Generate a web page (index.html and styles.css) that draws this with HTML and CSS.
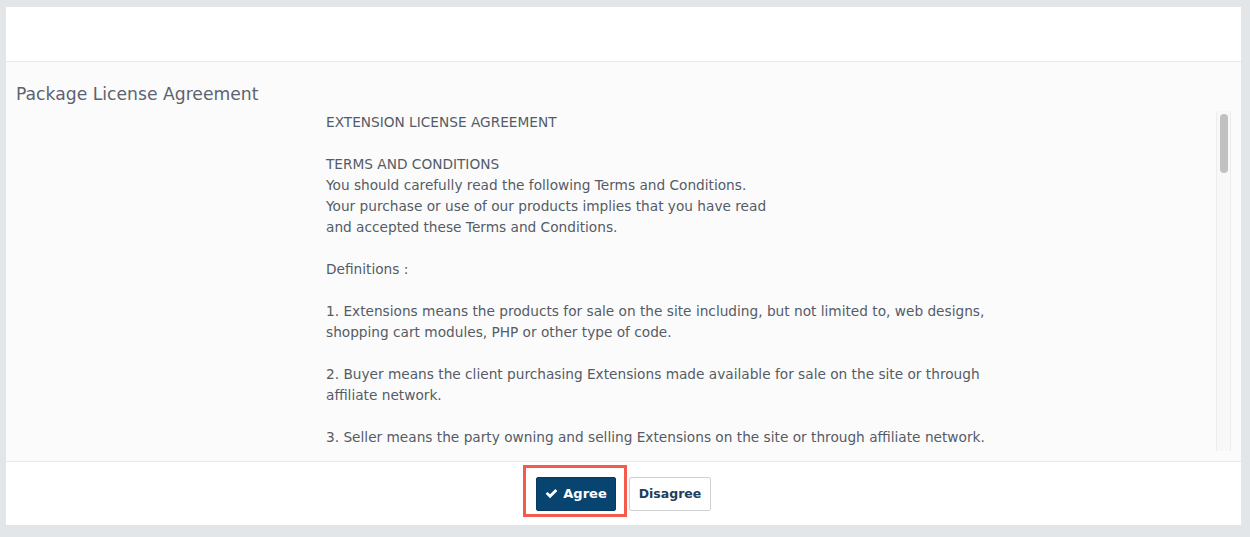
FILE: index.html
```html
<!DOCTYPE html>
<html>
<head>
<meta charset="utf-8">
<link rel="stylesheet" href="styles.css">
</head>
<body>
<div class="card">
  <div class="card-head"></div>
  <div class="card-body">
    <div class="label-col">Package License Agreement</div>
    <div class="textbox">
      <div class="text">EXTENSION LICENSE AGREEMENT

TERMS AND CONDITIONS
You should carefully read the following Terms and Conditions.
Your purchase or use of our products implies that you have read
and accepted these Terms and Conditions.

Definitions :

1. Extensions means the products for sale on the site including, but not limited to, web designs,
shopping cart modules, PHP or other type of code.

2. Buyer means the client purchasing Extensions made available for sale on the site or through
affiliate network.

3. Seller means the party owning and selling Extensions on the site or through affiliate network.</div>
      <div class="scrollbar"><div class="thumb"></div></div>
    </div>
  </div>
  <div class="card-foot">
    <span class="agree-wrap">
      <button class="btn btn-primary"><svg class="check" viewBox="0 0 16 16" width="13" height="13"><path d="M0.8 8.4 L3.2 6 L6.2 9 L12.8 2.4 L15.2 4.8 L6.2 13.8 Z" fill="#fff"/></svg>Agree</button>
      <span class="highlight"></span>
    </span>
    <button class="btn btn-default">Disagree</button>
  </div>
</div>
</body>
</html>
```
FILE: styles.css
```css
html, body {
  margin: 0;
  padding: 0;
}
body {
  background: #e3e6e9;
  padding: 7px 9px 0 6px;
  font-family: "DejaVu Sans", Verdana, sans-serif;
  color: #555b66;
}
.card {
  background: #fff;
  box-shadow: 0 2px 0 #d6d9dc;
}
.card-head {
  height: 54px;
  border-bottom: 1px solid #e8e9ea;
}
.card-body {
  background: #fbfbfb;
  height: 399px;
  display: flex;
  border-bottom: 1px solid #e8e9ea;
}
.label-col {
  width: 300px;
  padding: 22px 0 0 10px;
  font-size: 17.2px;
  color: #5b6370;
}
.textbox {
  flex: 1;
  margin: 49px 10px 10px 0;
  display: flex;
  overflow: hidden;
}
.text {
  flex: 1;
  padding: 1px 10px 0 10px;
  white-space: pre-line;
  font-size: 13.7px;
  line-height: 21px;
  color: #555b66;
}
.scrollbar {
  width: 13px;
  border-left: 1px solid #ececec;
  border-right: 1px solid #ececec;
  background: #f8f8f8;
  padding: 3px 0 0 0;
  display: flex;
  justify-content: center;
  align-items: flex-start;
}
.thumb {
  width: 8px;
  height: 59px;
  border-radius: 4px;
  background: #c1c1c1;
}
.card-foot {
  height: 63px;
  display: flex;
  align-items: center;
  justify-content: center;
  gap: 13px;
}
.agree-wrap {
  position: relative;
  display: inline-flex;
}
.highlight {
  position: absolute;
  left: -13px;
  right: -11px;
  top: -12px;
  bottom: -6px;
  border: 3px solid #f45b4c;
  pointer-events: none;
}
.btn {
  height: 34px;
  padding: 0;
  font-family: "DejaVu Sans", Verdana, sans-serif;
  font-size: 13px;
  font-weight: bold;
  display: inline-flex;
  align-items: center;
  justify-content: center;
  border-radius: 2px;
  cursor: pointer;
}
.btn-primary {
  width: 80px;
  background: #074470;
  border: 1px solid #063a61;
  color: #fff;
}
.check {
  margin-right: 5px;
}
.btn-default {
  width: 82px;
  background: #fff;
  border: 1px solid #cfd2d5;
  color: #1d3e5e;
  font-size: 12.5px;
}
```
